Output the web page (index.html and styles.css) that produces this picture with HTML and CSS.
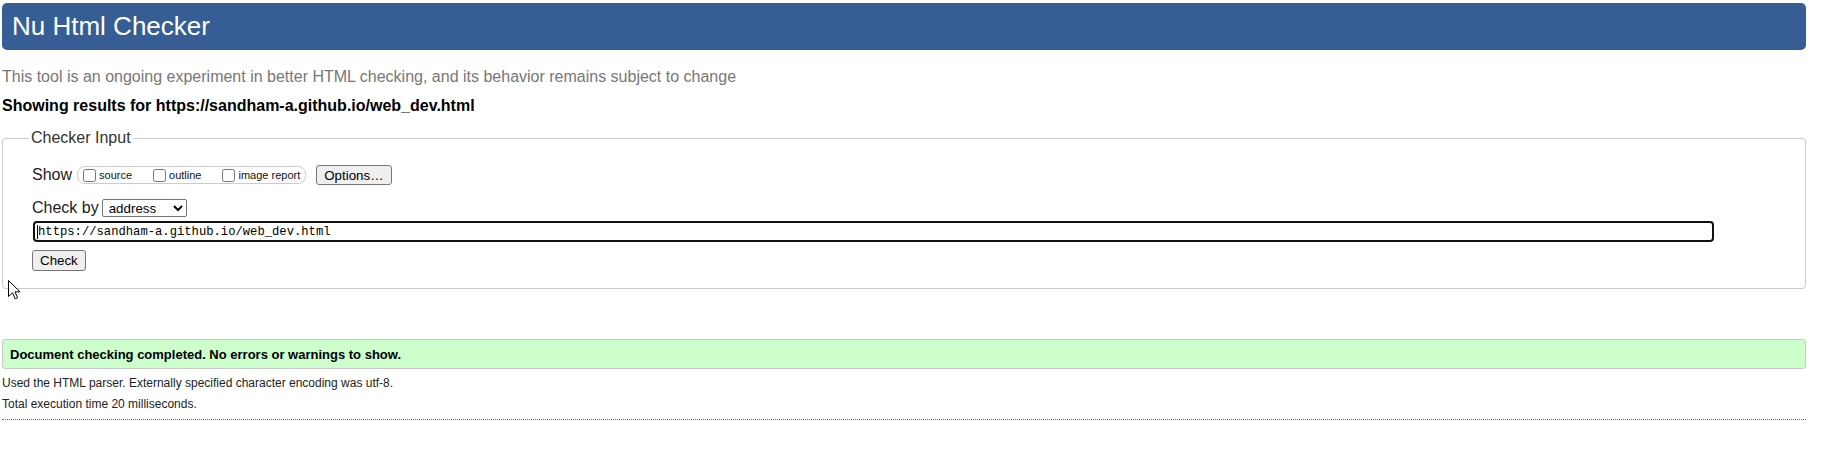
FILE: index.html
```html
<!DOCTYPE html>
<html lang="en">
<head>
<meta charset="utf-8">
<title>Nu Html Checker</title>
<link rel="stylesheet" href="styles.css">
</head>
<body>
<h1 class="title">Nu Html Checker</h1>
<p class="about">This tool is an ongoing experiment in better HTML checking, and its behavior remains subject to change</p>
<p class="showing">Showing results for https://sandham-a.github.io/web_dev.html</p>
<form class="checker">
  <fieldset class="input-box">
    <legend class="legend">Checker Input</legend>
    <div class="row show-row">
      <span class="label">Show</span>
      <span class="toggles">
        <label class="toggle"><input type="checkbox" class="cb">source</label>
        <label class="toggle"><input type="checkbox" class="cb">outline</label>
        <label class="toggle last"><input type="checkbox" class="cb">image report</label>
      </span>
      <button type="button" class="btn options">Options…</button>
    </div>
    <div class="row by-row">
      <span class="label">Check by</span>
      <select class="select"><option>address</option></select>
    </div>
    <div class="url-wrap">
      <input type="text" class="url" value="https://sandham-a.github.io/web_dev.html">
      <span class="caret"></span>
    </div>
    <div class="check-row">
      <button type="submit" class="btn check">Check</button>
    </div>
  </fieldset>
</form>
<div class="success">Document checking completed. No errors or warnings to show.</div>
<p class="meta">Used the HTML parser. Externally specified character encoding was utf-8.</p>
<p class="meta">Total execution time 20 milliseconds.</p>
<div class="rule"></div>
<svg class="cursor" width="13" height="20" viewBox="0 0 13 20" aria-hidden="true">
  <path d="M0.5 0.5 L0.5 16.5 L4.5 12.8 L7.2 18.8 L9.6 17.8 L7 11.8 L12 11.8 Z" fill="#fff" stroke="#000" stroke-width="1" stroke-linejoin="miter"/>
</svg>
</body>
</html>
```

FILE: styles.css
```css
html, body {
  background: #fff;
}

body {
  margin: 0;
  padding: 3px 24px 0 2px;
  font-family: "Liberation Sans", Arial, sans-serif;
  font-size: 16px;
  color: #000;
  position: relative;
}

.title {
  margin: 0;
  height: 47px;
  box-sizing: border-box;
  padding-left: 10px;
  display: flex;
  align-items: center;
  background: #365e94;
  color: #fff;
  border-radius: 5px;
  font-size: 26px;
  font-weight: normal;
}

.about {
  margin: 18px 0 0;
  color: #777777;
  line-height: 18px;
}

.showing {
  margin: 11px 0 0;
  font-weight: bold;
  line-height: 18px;
  color: #000;
}

.checker {
  margin: 0;
}

.input-box {
  margin: 14px 0 0;
  border: 1px solid #cccccc;
  border-radius: 4px;
  padding: 18px 29px 17px 29px;
  min-width: 0;
}

.legend {
  padding: 0 2px;
  margin-left: -3px;
  line-height: 18px;
  color: #333;
}

.row {
  display: flex;
  align-items: center;
}

.show-row {
  height: 20px;
}

.label {
  line-height: 18px;
  color: #222;
}

.toggles {
  display: inline-flex;
  align-items: center;
  height: 16px;
  margin-left: 5px;
  border: 1px solid #cccccc;
  border-radius: 8px;
  padding: 0 5px 0 0;
  font-size: 11px;
}

.toggle {
  display: inline-flex;
  align-items: center;
  margin-right: 16px;
  color: #111;
}

.toggle.last {
  margin-right: 0;
}

.cb {
  width: 13px;
  height: 13px;
  margin: 0 3px 0 5px;
}

.btn {
  font-family: "Liberation Sans", Arial, sans-serif;
  font-size: 13.333px;
  background: #efefef;
  border: 1px solid #767676;
  border-radius: 3px;
  color: #000;
  padding: 0 7px;
  box-sizing: border-box;
  line-height: 15px;
}

.options {
  height: 20px;
  margin-left: 10px;
}

.by-row {
  margin-top: 14px;
  height: 18px;
}

.select {
  margin-left: 3px;
  width: 85px;
  height: 18px;
  font-family: "Liberation Sans", Arial, sans-serif;
  font-size: 13.333px;
  padding: 0 0 0 2px;
  border: 1px solid #767676;
  border-radius: 2px;
  background: #fff;
  color: #000;
}

.url-wrap {
  position: relative;
  margin: 4px 0 0 1px;
  width: 1681px;
}

.url {
  display: block;
  box-sizing: border-box;
  width: 1681px;
  height: 21px;
  border: 2px solid #101010;
  border-radius: 4px;
  padding: 0 3px;
  font-family: "Liberation Mono", "DejaVu Sans Mono", monospace;
  font-size: 12.2px;
  color: #000;
  background: #fff;
  outline: none;
}

.caret {
  position: absolute;
  left: 4px;
  top: 4px;
  width: 1px;
  height: 14px;
  background: #000;
}

.check-row {
  margin-top: 8px;
}

.check {
  height: 21px;
}

.success {
  margin-top: 50px;
  height: 30px;
  box-sizing: border-box;
  border: 1px solid #c8c8c8;
  border-radius: 3px;
  background: #ccffcc;
  padding: 7px 7px 6px;
  font-size: 13px;
  line-height: 15px;
  font-weight: bold;
  color: #000;
}

.meta {
  margin: 7px 0 0;
  font-size: 12px;
  line-height: 14px;
  color: #222;
}

.rule {
  margin-top: 8px;
  border-top: 1px dotted #666;
}

.cursor {
  position: absolute;
  left: 8px;
  top: 280px;
}
```
